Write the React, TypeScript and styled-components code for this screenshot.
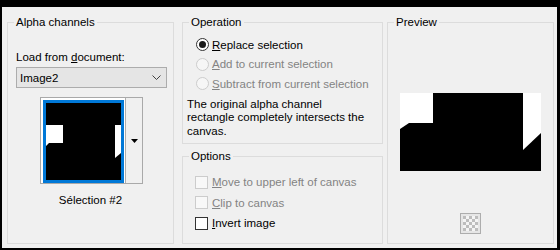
import React from "react";
import styled, { createGlobalStyle } from "styled-components";

const GlobalStyle = createGlobalStyle`
  html, body { margin: 0; padding: 0; background: #f0f0f0; }
  body {
    font-family: "Liberation Sans", Arial, sans-serif;
    font-size: 11.5px;
    color: #000;
  }
`;

const Frame = styled.div`
  box-sizing: border-box;
  width: 560px;
  height: 250px;
  border-style: solid;
  border-color: #000;
  border-width: 7px 3px 2px 2px;
  background: #f0f0f0;
  padding: 8px 3px 4px 5px;
  display: flex;
  align-items: stretch;
`;

const SideColumn = styled.div`
  width: 167px;
  display: flex;
  flex-direction: column;
`;

const MiddleColumn = styled.div`
  width: 201px;
  margin: 0 4px 0 8px;
  display: flex;
  flex-direction: column;
  gap: 5px;
`;

const Group = styled.fieldset<{ $h?: number }>`
  box-sizing: border-box;
  margin: 0;
  padding: 0;
  min-width: 0;
  border: 1px solid #dcdcdc;
  ${(p) => (p.$h ? `height: ${p.$h}px; flex: none;` : `flex: 1;`)}
`;

const Legend = styled.legend`
  margin-left: 6px;
  padding: 0 2px;
  line-height: 14px;
  font-size: 11.5px;
  color: #000;
`;

const Body = styled.div<{ $top: number }>`
  display: flex;
  flex-direction: column;
  align-items: flex-start;
  padding-top: ${(p) => p.$top}px;
`;

const Key = styled.span`
  text-decoration: underline;
  text-underline-offset: 1px;
`;

const FieldLabel = styled.div`
  margin-left: 8px;
  line-height: 14px;
  white-space: nowrap;
`;

const Select = styled.div`
  box-sizing: border-box;
  margin: 3px 0 0 8px;
  width: 151px;
  height: 21px;
  border: 1px solid #acacac;
  background: #e5e5e5;
  display: flex;
  align-items: center;
  justify-content: space-between;
  padding: 0 5px 0 3px;
  line-height: 14px;
`;

const ThumbButton = styled.div`
  box-sizing: border-box;
  margin: 9px 0 0 32px;
  width: 103px;
  height: 87px;
  border: 1px solid #a9a9a9;
  background: #fff;
  display: flex;
`;

const ThumbCell = styled.div`
  padding: 2px 1px 0 2px;
`;

const ThumbFrame = styled.div`
  box-sizing: border-box;
  width: 81px;
  height: 83px;
  border: 3px solid #0078d7;
  background: #000;
  display: flex;
`;

const ThumbArrow = styled.div`
  width: 16px;
  border-left: 1px solid #adadad;
  background: #f0f0f0;
  display: flex;
  align-items: center;
  justify-content: center;
`;

const Caption = styled.div`
  align-self: stretch;
  margin-top: 9px;
  text-align: center;
  line-height: 14px;
`;

const OptionRow = styled.div<{ $h: number; $indent: number; $disabled?: boolean }>`
  height: ${(p) => p.$h}px;
  margin-left: ${(p) => p.$indent}px;
  display: flex;
  align-items: center;
  gap: 3px;
  white-space: nowrap;
  color: ${(p) => (p.$disabled ? "#838383" : "#000")};
`;

const RadioCircle = styled.span<{ $checked?: boolean; $disabled?: boolean }>`
  box-sizing: border-box;
  width: 13px;
  height: 13px;
  border-radius: 50%;
  border: 1px solid ${(p) => (p.$disabled ? "#cccccc" : "#333333")};
  background: ${(p) => (p.$disabled ? "#f6f6f6" : "#ffffff")};
  display: flex;
  align-items: center;
  justify-content: center;
  flex: none;
  &::after {
    content: "";
    display: ${(p) => (p.$checked ? "block" : "none")};
    width: 7px;
    height: 7px;
    border-radius: 50%;
    background: #1a1a1a;
  }
`;

const CheckBox = styled.span<{ $disabled?: boolean }>`
  box-sizing: border-box;
  width: 13px;
  height: 13px;
  border: 1px solid ${(p) => (p.$disabled ? "#cccccc" : "#333333")};
  background: ${(p) => (p.$disabled ? "#f8f8f8" : "#ffffff")};
  flex: none;
  margin-right: 1px;
`;

const Note = styled.p`
  margin: 4px 0 0 4px;
  line-height: 13.5px;
  white-space: nowrap;
`;

const PreviewImage = styled.svg`
  display: block;
  margin: 0 0 0 12px;
`;

const CheckerButton = styled.div`
  box-sizing: border-box;
  margin: 42px 0 0 72px;
  width: 21px;
  height: 21px;
  border: 1px solid #adadad;
  background: #e6e6e6;
  display: flex;
  align-items: center;
  justify-content: center;
`;

const Checker: React.FC = () => {
  const cells: React.ReactNode[] = [];
  for (let r = 0; r < 5; r++) {
    for (let c = 0; c < 5; c++) {
      cells.push(
        <rect
          key={`${r}-${c}`}
          x={c * 3}
          y={r * 3}
          width={3}
          height={3}
          fill={(r + c) % 2 === 0 ? "#bdbdbd" : "#f4f4f4"}
        />
      );
    }
  }
  return (
    <svg width={15} height={15} viewBox="0 0 15 15">
      {cells}
    </svg>
  );
};

export default function App() {
  return (
    <>
      <GlobalStyle />
      <Frame>
        <SideColumn>
          <Group>
            <Legend>Alpha channels</Legend>
            <Body $top={21}>
              <FieldLabel>
                Load from <Key>d</Key>ocument:
              </FieldLabel>
              <Select>
                <span>Image2</span>
                <svg width={9} height={5} viewBox="0 0 9 5">
                  <path d="M0.5 0.5 L4.5 4.5 L8.5 0.5" fill="none" stroke="#404040" strokeWidth={1} />
                </svg>
              </Select>
              <ThumbButton>
                <ThumbCell>
                  <ThumbFrame>
                    <svg width={75} height={77} viewBox="0 0 75 77">
                      <rect width={75} height={77} fill="#000" />
                      <polygon points="0,22 17,22 17,40 3,40 0,43" fill="#fff" />
                      <polygon points="69,22 75,22 75,50 69,55" fill="#fff" />
                    </svg>
                  </ThumbFrame>
                </ThumbCell>
                <ThumbArrow>
                  <svg width={7} height={4} viewBox="0 0 7 4">
                    <path d="M0 0 H7 L3.5 4 Z" fill="#000" />
                  </svg>
                </ThumbArrow>
              </ThumbButton>
              <Caption>Sélection #2</Caption>
            </Body>
          </Group>
        </SideColumn>

        <MiddleColumn>
          <Group $h={129}>
            <Legend>Operation</Legend>
            <Body $top={6}>
              <OptionRow $h={19.5} $indent={13}>
                <RadioCircle $checked />
                <span>
                  <Key>R</Key>eplace selection
                </span>
              </OptionRow>
              <OptionRow $h={19.5} $indent={13} $disabled>
                <RadioCircle $disabled />
                <span>
                  <Key>A</Key>dd to current selection
                </span>
              </OptionRow>
              <OptionRow $h={19.5} $indent={13} $disabled>
                <RadioCircle $disabled />
                <span>
                  <Key>S</Key>ubtract from current selection
                </span>
              </OptionRow>
              <Note>
                The original alpha channel
                <br />
                rectangle completely intersects the
                <br />
                canvas.
              </Note>
            </Body>
          </Group>
          <Group>
            <Legend>Options</Legend>
            <Body $top={9}>
              <OptionRow $h={20.5} $indent={12} $disabled>
                <CheckBox $disabled />
                <span>
                  <Key>M</Key>ove to upper left of canvas
                </span>
              </OptionRow>
              <OptionRow $h={20.5} $indent={12} $disabled>
                <CheckBox $disabled />
                <span>
                  <Key>C</Key>lip to canvas
                </span>
              </OptionRow>
              <OptionRow $h={20.5} $indent={12}>
                <CheckBox />
                <span>
                  <Key>I</Key>nvert image
                </span>
              </OptionRow>
            </Body>
          </Group>
        </MiddleColumn>

        <SideColumn>
          <Group>
            <Legend>Preview</Legend>
            <Body $top={64}>
              <PreviewImage width={141} height={78} viewBox="0 0 141 78">
                <rect width={141} height={78} fill="#000" />
                <polygon points="0,0 33,0 33,30 9,30 0,36" fill="#fff" />
                <polygon points="123,0 141,0 141,40 123,57" fill="#fff" />
              </PreviewImage>
              <CheckerButton>
                <Checker />
              </CheckerButton>
            </Body>
          </Group>
        </SideColumn>
      </Frame>
    </>
  );
}
